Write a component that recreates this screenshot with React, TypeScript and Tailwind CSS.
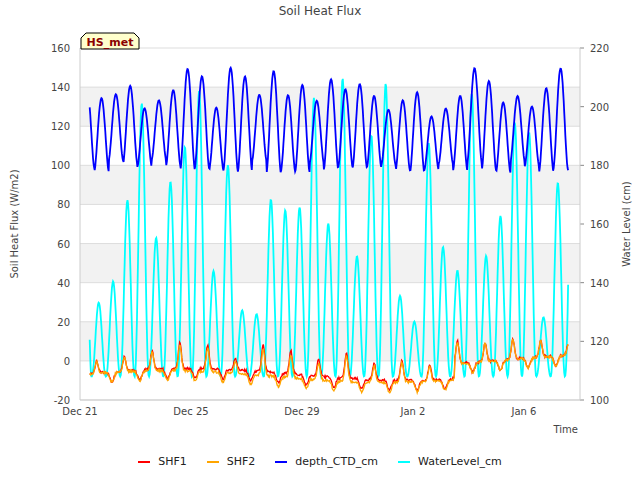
import React from 'react';

const X0 = 80, X1 = 580, Y0 = 48, Y1 = 400;
const DAYPX = 27.75;
const yL = (v: number) => Y1 - ((v + 20) / 180) * (Y1 - Y0);
const xD = (d: number) => X0 + d * DAYPX;

function rnd(i: number) {
  const s = Math.sin(i * 12.9898) * 43758.5453;
  return s - Math.floor(s);
}

const T0 = 0.35, T1 = 17.6, STEP = 0.02;
const days: number[] = [];
for (let t = T0; t <= T1; t += STEP) days.push(t);

const TIDE = 0.517;
function cycle(t: number) { return Math.floor(t / TIDE); }

const blue = days.map(t => {
  const c = cycle(t);
  const ph = (t / TIDE) % 1;
  const hi = 125 + rnd(c + 3) * 25;
  const lo = 96 + rnd(c + 50) * 8;
  const v = lo + (hi - lo) * Math.pow(Math.max(0, Math.sin(ph * Math.PI)), 1.6);
  return [xD(t), yL(Math.min(150, v))];
});

const cyan = days.map(t => {
  const c = cycle(t + 0.1);
  const ph = ((t + 0.1) / TIDE) % 1;
  const pk = 20 + rnd(c + 101) * 125;
  const v = -8 + (pk + 8) * Math.pow(Math.max(0, Math.sin(ph * Math.PI)), 2.2);
  return [xD(t), yL(v)];
});

function shf(t: number, off: number) {
  const ph = t % 1;
  const base = -7 + 3 * Math.sin(t * 0.4 + off);
  const bump = 9 * Math.exp(-Math.pow((ph - 0.6) / 0.08, 2)) * (0.5 + rnd(Math.floor(t) + 7));
  const dip = -5 * Math.exp(-Math.pow((ph - 0.15) / 0.1, 2));
  const late = t > 13.5 ? 8 : 0;
  return base + bump + dip + late + (rnd(Math.round(t * 50) + off * 9) - 0.5) * 1.2;
}
const red = days.map(t => [xD(t), yL(shf(t, 0))]);
const orange = days.map(t => [xD(t), yL(shf(t, 0.3) - 1)]);

const pts = (a: number[][]) => a.map(p => p[0].toFixed(1) + ',' + p[1].toFixed(1)).join(' ');

const leftTicks = [160, 140, 120, 100, 80, 60, 40, 20, 0, -20];
const rightTicks = [220, 200, 180, 160, 140, 120, 100];
const yR = (v: number) => Y1 - ((v - 100) / 120) * (Y1 - Y0);
const xTicks = [['Dec 21', 0], ['Dec 25', 4], ['Dec 29', 8], ['Jan 2', 12], ['Jan 6', 16]] as [string, number][];

export default function App() {
  const font = { fontFamily: '"DejaVu Sans", sans-serif' };
  return (
    <div className="w-[640px] h-[480px] bg-white relative" style={font}>
      <svg width={640} height={440} className="block">
        {[[120, 140], [80, 100], [40, 60], [0, 20]].map(([a, b]) => (
          <rect key={a} x={X0} y={yL(b)} width={X1 - X0} height={yL(a) - yL(b)} fill="#f2f2f2" />
        ))}
        {leftTicks.map(v => (
          <g key={v}>
            <line x1={X0} x2={X1} y1={yL(v)} y2={yL(v)} stroke="#dddddd" strokeWidth={1} />
            <text x={X0 - 10} y={yL(v) + 4} textAnchor="end" fontSize={10} fill="#444">{v}</text>
          </g>
        ))}
        {rightTicks.map(v => (
          <g key={v}>
            <line x1={X1} x2={X1 + 4} y1={yR(v)} y2={yR(v)} stroke="#888" />
            <text x={X1 + 10} y={yR(v) + 4} fontSize={10} fill="#444">{v}</text>
          </g>
        ))}
        {xTicks.map(([l, d]) => (
          <text key={l} x={xD(d)} y={Y1 + 15} textAnchor="middle" fontSize={10} fill="#444">{l}</text>
        ))}
        <line x1={X0} x2={X0} y1={Y0} y2={Y1} stroke="#cccccc" />
        <line x1={X1} x2={X1} y1={Y0} y2={Y1} stroke="#cccccc" />
        <line x1={X0} x2={X1} y1={Y1} y2={Y1} stroke="#cccccc" />
        <polyline points={pts(cyan)} fill="none" stroke="#00ffff" strokeWidth={1.8} />
        <polyline points={pts(blue)} fill="none" stroke="#0000ff" strokeWidth={1.8} />
        <polyline points={pts(red)} fill="none" stroke="#ff0000" strokeWidth={1.3} />
        <polyline points={pts(orange)} fill="none" stroke="#ffa500" strokeWidth={1.3} />
        <text x={320} y={15} textAnchor="middle" fontSize={12} fill="#444">Soil Heat Flux</text>
        <text x={578} y={433} textAnchor="end" fontSize={10} fill="#444">Time</text>
        <text transform="translate(18,224) rotate(-90)" textAnchor="middle" fontSize={10} fill="#444">Soil Heat Flux (W/m2)</text>
        <text transform="translate(630,224) rotate(-90)" textAnchor="middle" fontSize={10} fill="#444">Water Level (cm)</text>
        <path d="M81,49 L81,38 L86,33 L134,33 L139,38 L139,49 Z" fill="#ffffcc" stroke="#000" strokeWidth={1} />
        <text x={110} y={46} textAnchor="middle" fontSize={11} fontWeight="bold" fill="#8b0000">HS_met</text>
      </svg>
      <div className="flex justify-center items-center gap-[20px] text-[11px] text-[#222] mt-[14px]">
        {[['SHF1', 'bg-[#ff0000]'], ['SHF2', 'bg-[#ffa500]'], ['depth_CTD_cm', 'bg-[#0000ff]'], ['WaterLevel_cm', 'bg-[#00ffff]']].map(([l, c]) => (
          <div key={l} className="flex items-center gap-[8px]">
            <span className={`w-[12px] h-[2px] ${c}`} />
            <span>{l}</span>
          </div>
        ))}
      </div>
    </div>
  );
}
